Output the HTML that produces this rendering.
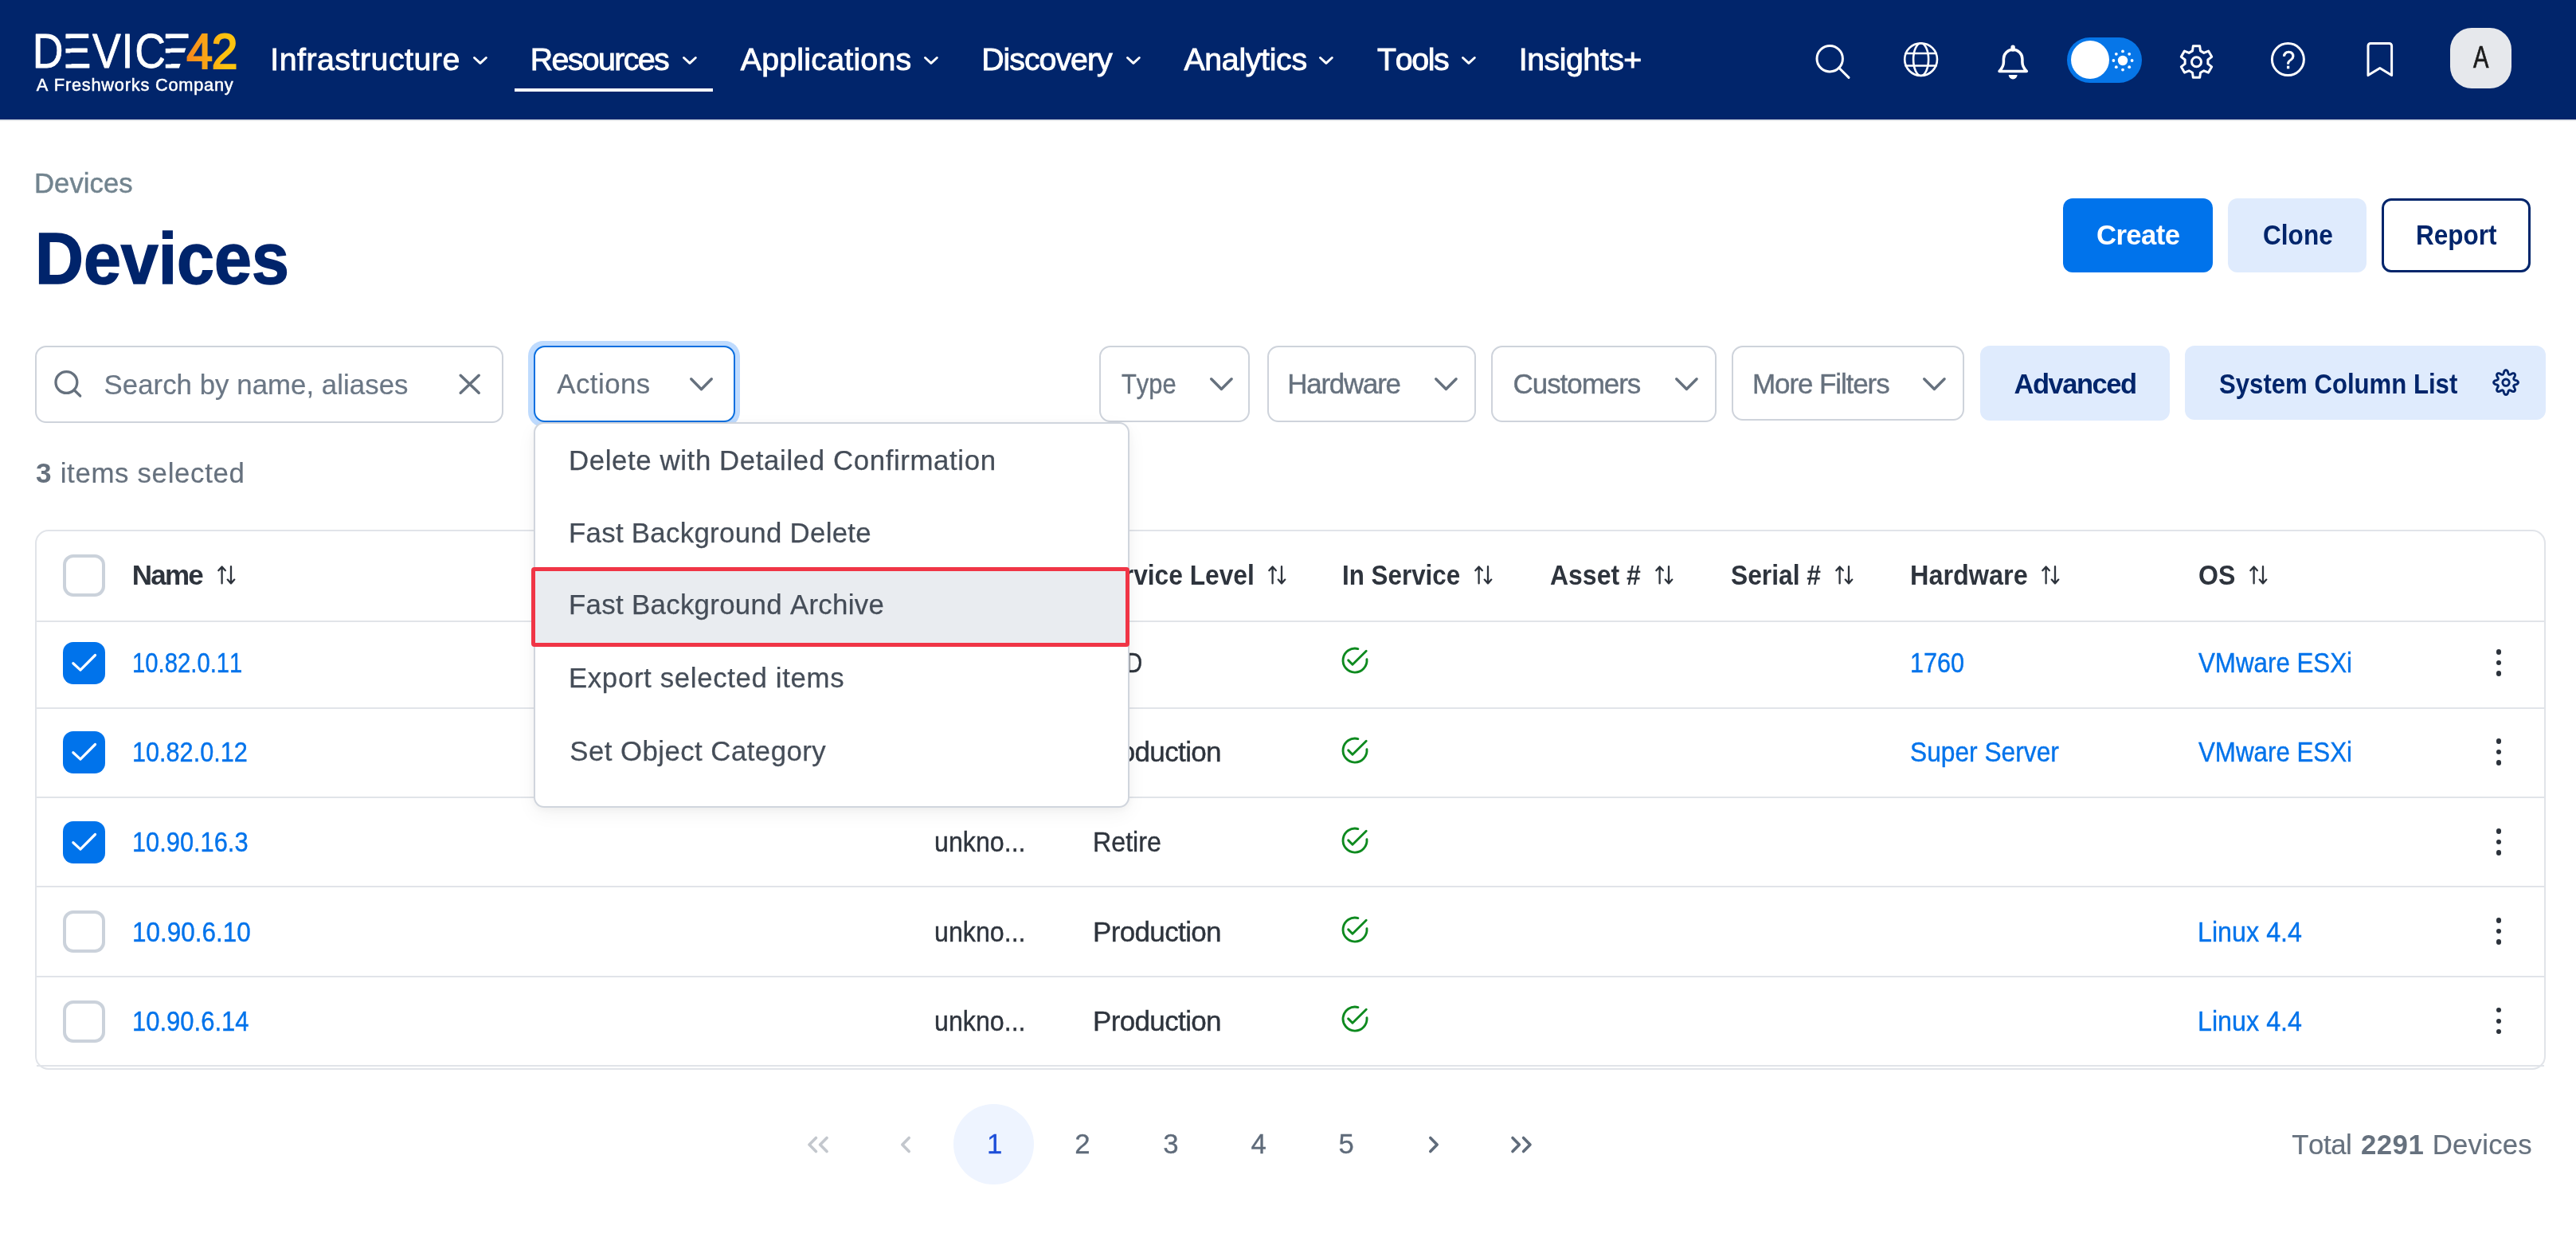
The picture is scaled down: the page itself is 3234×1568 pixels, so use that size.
<!DOCTYPE html><html lang="en"><head><meta charset="utf-8"><title>Devices - Device42</title>
<meta name="viewport" content="width=3234">
<style>
*{box-sizing:border-box;margin:0;padding:0}
html,body{width:3234px;height:1568px;background:#fff;overflow:hidden}
body{will-change:transform}
@media (max-width:1700px){html{zoom:.5}}
body{position:relative;font-family:"Liberation Sans",sans-serif;font-kerning:none;-webkit-font-smoothing:antialiased}
.t{position:absolute;white-space:nowrap;line-height:1;transform-origin:0 50%;display:block;font-weight:400;text-decoration:none}
.a{position:absolute;display:block}
svg{position:absolute;overflow:visible;fill:none;stroke-linecap:round;stroke-linejoin:round}
.topnav{position:absolute;left:0;top:0;width:3234px;height:150px;background:#01256b}
.g{position:absolute;left:0;top:0;width:0;height:0;display:block;list-style:none}
.box{position:absolute;border:2px solid #ced3db;border-radius:14px;background:#fff}
.btn{position:absolute;border-radius:12px}
.cb{position:absolute;width:53px;height:53px;border-radius:13px;border:4px solid #cbd2db;background:#fff}
.cb.on{border:0;background:#0073eb}
.hl{position:absolute;left:46px;width:3147.500px;height:2px;background:#e1e4e9}
</style></head><body>
<nav class="topnav" aria-label="Main">
<svg class="a" style="left:0;top:0" width="320" height="150" viewBox="0 0 320 150" stroke="none"><defs><linearGradient id="g42" gradientUnits="userSpaceOnUse" x1="240" x2="305" y1="0" y2="0"><stop offset="0" stop-color="#f47a20"/><stop offset="1" stop-color="#fdc30f"/></linearGradient></defs><text y="85.5" transform="scale(0.87 1)" font-family="Liberation Sans, sans-serif" font-size="61.6" fill="#fff" stroke="#fff" stroke-width="0.8" x="46.79 90.35 133.29 175.35 194.57 234.26">DEVICE</text><rect x="81.0" y="48.3" width="8.6" height="12.6" fill="#01256b"/><rect x="81.0" y="66.6" width="8.6" height="14" fill="#01256b"/><rect x="206.2" y="48.3" width="8.6" height="12.6" fill="#01256b"/><rect x="206.2" y="66.6" width="8.6" height="14" fill="#01256b"/><polygon points="240.4,40 252,40 252,90 223.300,90" fill="#01256b"/><text y="85.600" transform="scale(0.93 1)" font-family="Liberation Sans, sans-serif" font-size="63.2" fill="url(#g42)" stroke="url(#g42)" stroke-width="2.2" stroke-linejoin="miter" x="251.78 285.75">42</text></svg>
<span class="t" style="left:45.71px;top:96px;font-size:21.80px;color:#fff;letter-spacing:0.762px;-webkit-text-stroke:0.5px #fff">A Freshworks Company</span>
<ul class="g">
<li class="g">
<a class="t" style="left:339.22px;top:55px;font-size:39.30px;color:#fff;letter-spacing:0.504px;-webkit-text-stroke:0.9px #fff">Infrastructure</a>
<svg class="a" style="left:593.7px;top:70.6px" width="17.8" height="9.8" viewBox="0 0 17.8 9.8" stroke="#fff" stroke-width="3" ><polyline points="1.5,1.5 8.9,8.3 16.3,1.5"/></svg>
</li>
<li class="g">
<a class="t" style="left:665.63px;top:55px;font-size:39.30px;color:#fff;letter-spacing:-1.588px;-webkit-text-stroke:0.9px #fff">Resources</a>
<svg class="a" style="left:857px;top:70.6px" width="17.8" height="9.8" viewBox="0 0 17.8 9.8" stroke="#fff" stroke-width="3" ><polyline points="1.5,1.5 8.9,8.3 16.3,1.5"/></svg>
</li>
<li class="g">
<a class="t" style="left:929.77px;top:55px;font-size:39.30px;color:#fff;letter-spacing:0.226px;-webkit-text-stroke:0.9px #fff">Applications</a>
<svg class="a" style="left:1160.4px;top:70.6px" width="17.8" height="9.8" viewBox="0 0 17.8 9.8" stroke="#fff" stroke-width="3" ><polyline points="1.5,1.5 8.9,8.3 16.3,1.5"/></svg>
</li>
<li class="g">
<a class="t" style="left:1232.23px;top:55px;font-size:39.30px;color:#fff;letter-spacing:-1.002px;-webkit-text-stroke:0.9px #fff">Discovery</a>
<svg class="a" style="left:1413.6px;top:70.6px" width="17.8" height="9.8" viewBox="0 0 17.8 9.8" stroke="#fff" stroke-width="3" ><polyline points="1.5,1.5 8.9,8.3 16.3,1.5"/></svg>
</li>
<li class="g">
<a class="t" style="left:1486.47px;top:55px;font-size:39.30px;color:#fff;letter-spacing:-0.333px;-webkit-text-stroke:0.9px #fff">Analytics</a>
<svg class="a" style="left:1656.3px;top:70.6px" width="17.8" height="9.8" viewBox="0 0 17.8 9.8" stroke="#fff" stroke-width="3" ><polyline points="1.5,1.5 8.9,8.3 16.3,1.5"/></svg>
</li>
<li class="g">
<a class="t" style="left:1728.97px;top:55px;font-size:39.30px;color:#fff;letter-spacing:-1.325px;-webkit-text-stroke:0.9px #fff">Tools</a>
<svg class="a" style="left:1835.2px;top:70.6px" width="17.8" height="9.8" viewBox="0 0 17.8 9.8" stroke="#fff" stroke-width="3" ><polyline points="1.5,1.5 8.9,8.3 16.3,1.5"/></svg>
</li>
<li class="g">
<a class="t" style="left:1906.82px;top:55px;font-size:39.30px;color:#fff;letter-spacing:-0.491px;-webkit-text-stroke:0.9px #fff">Insights+</a>
</li>
</ul>
<i class="a" style="left:646px;top:111px;width:249px;height:4px;background:#fff"></i>
<svg class="a" style="left:2270px;top:50px" width="60" height="56" viewBox="0 0 60 56" stroke="#fff" stroke-width="3" ><circle cx="27.2" cy="23.7" r="16.2"/><path d="M38.8 35.3 51 47.4"/></svg>
<svg class="a" style="left:2385px;top:50px" width="54" height="50" viewBox="0 0 54 50" stroke="#fff" stroke-width="2.6" ><circle cx="26.6" cy="24.6" r="20.4"/><ellipse cx="26.6" cy="24.6" rx="9.5" ry="20.4"/><path d="M7.600 17H45.600M7.600 32.500H45.600"/></svg>
<svg class="a" style="left:2500px;top:50px" width="54" height="54" viewBox="0 0 54 54" stroke="#fff" stroke-width="3" ><path d="M10 39.4C13.8 35.5 15.4 33 15.4 28V24A11.75 11.75 0 0 1 38.9 24V28C38.9 33 40.5 35.5 44.3 39.4Z" stroke-width="3.5"/><path d="M27.1 9.2V12" stroke-width="5.4"/><path d="M21.7 44.1h10.900a5.450 5.300 0 0 1-10.900 0Z" fill="#fff" stroke="none"/></svg>
<i class="a" style="left:2595px;top:47px;width:94px;height:57px;border-radius:29px;background:#0676e8"></i>
<i class="a" style="left:2600px;top:51px;width:48px;height:48px;border-radius:50%;background:#fff"></i>
<svg class="a" style="left:2645px;top:55.7px" width="40" height="40" viewBox="0 0 40 40" stroke="none" stroke-width="0" ><circle cx="20" cy="20" r="6.2" fill="#fff"/><circle cx="31.60" cy="20.00" r="1.9" fill="#fff"/><circle cx="28.20" cy="28.20" r="1.9" fill="#fff"/><circle cx="20.00" cy="31.60" r="1.9" fill="#fff"/><circle cx="11.80" cy="28.20" r="1.9" fill="#fff"/><circle cx="8.40" cy="20.00" r="1.9" fill="#fff"/><circle cx="11.80" cy="11.80" r="1.9" fill="#fff"/><circle cx="20.00" cy="8.40" r="1.9" fill="#fff"/><circle cx="28.20" cy="11.80" r="1.9" fill="#fff"/></svg>
<svg class="a" style="left:2730px;top:50px" width="56" height="56" viewBox="0 0 56 56" stroke="#fff" stroke-width="3" ><path d="M32.49 13.88 L31.70 7.84 L23.30 7.84 L22.51 13.88 L18.12 16.42 L12.49 14.08 L8.29 21.36 L13.12 25.06 L13.12 30.14 L8.29 33.84 L12.49 41.12 L18.12 38.78 L22.51 41.32 L23.30 47.36 L31.70 47.36 L32.49 41.32 L36.88 38.78 L42.51 41.12 L46.71 33.84 L41.88 30.14 L41.88 25.06 L46.71 21.36 L42.51 14.08 L36.88 16.42Z"/><circle cx="27.5" cy="27.8" r="6"/></svg>
<svg class="a" style="left:2846px;top:48px" width="54" height="54" viewBox="0 0 54 54" stroke="#fff" stroke-width="3" ><circle cx="26.4" cy="26.6" r="20"/></svg>
<span class="t" style="left:2864.76px;top:60px;font-size:31.50px;color:#fff;transform:scaleX(0.9231);-webkit-text-stroke:0.5px #fff">?</span>
<svg class="a" style="left:2966px;top:48px" width="44" height="52" viewBox="0 0 44 52" stroke="#fff" stroke-width="3" ><path d="M7 9.500a3 3 0 0 1 3-3h23.600a3 3 0 0 1 3 3V46.6L21.800 37.400 7 46.600Z"/></svg>
<i class="a" style="left:3076px;top:35px;width:77px;height:76px;border-radius:27px;background:#e6e8ec"></i>
<span class="t" style="left:3105.29px;top:52px;font-size:39.00px;color:#1c1c1c;transform:scaleX(0.7463);-webkit-text-stroke:0.7px #1c1c1c">A</span>
</nav>
<i class="a" style="left:0;top:150px;width:3234px;height:2px;background:#e2e5ea"></i>
<main class="g">
<header class="g">
<nav class="g" aria-label="Breadcrumb">
<a class="t" style="left:43.00px;top:213px;font-size:34.70px;color:#72848f;letter-spacing:0.031px;-webkit-text-stroke:0.5px #72848f">Devices</a>
</nav>
<h1 class="t" style="left:43.86px;top:279px;font-size:91.40px;color:#00246b;transform:scaleX(0.9226);font-weight:700;-webkit-text-stroke:1.6px #00246b">Devices</h1>
<div class="g" role="button">
<i class="btn" style="left:2590px;top:249px;width:188px;height:93px;background:#0073eb"></i>
<span class="t" style="left:2631.98px;top:278px;font-size:34.70px;color:#fff;letter-spacing:-0.601px;font-weight:700">Create</span>
</div>
<div class="g" role="button">
<i class="btn" style="left:2797px;top:249px;width:174px;height:93px;background:#dfebfd"></i>
<span class="t" style="left:2840.80px;top:278px;font-size:34.70px;color:#01256b;transform:scaleX(0.9106);font-weight:700">Clone</span>
</div>
<div class="g" role="button">
<i class="btn" style="left:2990px;top:249px;width:187px;height:93px;border:3px solid #01256b;background:#fff"></i>
<span class="t" style="left:3033.29px;top:278px;font-size:34.70px;color:#01256b;transform:scaleX(0.9086);font-weight:700">Report</span>
</div>
</header>
<section class="g" aria-label="Toolbar">
<div class="g" role="search">
<i class="box" style="left:44px;top:434px;width:588px;height:97px"></i>
<svg class="a" style="left:60px;top:460px" width="50" height="46" viewBox="0 0 50 46" stroke="#66717e" stroke-width="3.3" ><circle cx="23.4" cy="20" r="13.4"/><path d="M33.2 29.800 40.700 37"/></svg>
<span class="t" style="left:130.52px;top:466px;font-size:34.80px;color:#6b7785;letter-spacing:0.040px;-webkit-text-stroke:0.2px #6b7785">Search by name, aliases</span>
<svg class="a" style="left:570px;top:464px" width="40" height="36" viewBox="0 0 40 36" stroke="#66717e" stroke-width="3.5" ><path d="M8.2 7.300 31.200 29.200M31.200 7.300 8.200 29.200"/></svg>
</div>
<div class="g" role="combobox" aria-expanded="true">
<i class="a" style="left:662.800px;top:428px;width:266.400px;height:108px;border-radius:19px;background:#bfdbfe"></i>
<i class="box" style="left:670px;top:434px;width:253px;height:96px;border-color:#0a6fe0"></i>
<span class="t" style="left:699.33px;top:465px;font-size:34.80px;color:#66717e;letter-spacing:0.451px;-webkit-text-stroke:0.2px #66717e">Actions</span>
<svg class="a" style="left:866.4px;top:474px" width="29.0" height="16.4" viewBox="0 0 29.0 16.4" stroke="#66717e" stroke-width="3.4" ><polyline points="1.7,1.7 14.5,14.7 27.3,1.7"/></svg>
</div>
<div class="g" role="combobox">
<i class="box" style="left:1380px;top:434px;width:189.0px;height:96px"></i>
<span class="t" style="left:1407.51px;top:464px;font-size:35.00px;color:#66717e;transform:scaleX(0.8812);-webkit-text-stroke:0.4px #66717e">Type</span>
<svg class="a" style="left:1518.6px;top:474.1px" width="28.8" height="16.2" viewBox="0 0 28.8 16.2" stroke="#66717e" stroke-width="3.4" ><polyline points="1.7,1.7 14.4,14.5 27.1,1.7"/></svg>
</div>
<div class="g" role="combobox">
<i class="box" style="left:1590.5px;top:434px;width:262.0px;height:96px"></i>
<span class="t" style="left:1616.33px;top:464px;font-size:35.00px;color:#66717e;letter-spacing:-1.300px;-webkit-text-stroke:0.4px #66717e">Hardware</span>
<svg class="a" style="left:1800.7px;top:474.1px" width="28.8" height="16.2" viewBox="0 0 28.8 16.2" stroke="#66717e" stroke-width="3.4" ><polyline points="1.7,1.7 14.4,14.5 27.1,1.7"/></svg>
</div>
<div class="g" role="combobox">
<i class="box" style="left:1871.8px;top:434px;width:282.9px;height:96px"></i>
<span class="t" style="left:1899.52px;top:464px;font-size:35.00px;color:#66717e;letter-spacing:-1.058px;-webkit-text-stroke:0.4px #66717e">Customers</span>
<svg class="a" style="left:2102.6000000000004px;top:474.1px" width="28.8" height="16.2" viewBox="0 0 28.8 16.2" stroke="#66717e" stroke-width="3.4" ><polyline points="1.7,1.7 14.4,14.5 27.1,1.7"/></svg>
</div>
<div class="g" role="combobox">
<i class="box" style="left:2174px;top:434px;width:291.6px;height:94px"></i>
<span class="t" style="left:2200.03px;top:464px;font-size:35.00px;color:#66717e;letter-spacing:-1.100px;-webkit-text-stroke:0.4px #66717e">More Filters</span>
<svg class="a" style="left:2414.1000000000004px;top:474.1px" width="28.8" height="16.2" viewBox="0 0 28.8 16.2" stroke="#66717e" stroke-width="3.4" ><polyline points="1.7,1.7 14.4,14.5 27.1,1.7"/></svg>
</div>
<div class="g" role="button">
<i class="btn" style="left:2486px;top:434px;width:238px;height:94px;background:#dfebfd"></i>
<span class="t" style="left:2528.44px;top:465px;font-size:34.50px;color:#01256b;letter-spacing:-1.465px;font-weight:700">Advanced</span>
</div>
<div class="g" role="button">
<i class="btn" style="left:2742.500px;top:434px;width:453.500px;height:93px;background:#dfebfd"></i>
<span class="t" style="left:2785.90px;top:465px;font-size:34.50px;color:#01256b;transform:scaleX(0.9024);font-weight:700">System Column List</span>
<svg class="a" style="left:3128px;top:462px" width="38" height="38" viewBox="0 0 38 38" stroke="#01256b" stroke-width="2.9" ><path d="M33.45 18.10 L33.35 18.70 L33.05 19.28 L32.56 19.82 L31.87 20.29 L30.80 20.64 L29.72 20.90 L29.01 21.19 L28.47 21.48 L28.08 21.80 L27.84 22.16 L27.76 22.57 L27.81 23.07 L27.99 23.66 L28.29 24.37 L28.86 25.32 L29.37 26.33 L29.52 27.15 L29.49 27.87 L29.29 28.49 L28.94 28.99 L28.44 29.34 L27.82 29.54 L27.10 29.57 L26.28 29.42 L25.27 28.91 L24.32 28.34 L23.61 28.04 L23.02 27.86 L22.52 27.81 L22.11 27.89 L21.75 28.13 L21.43 28.52 L21.14 29.06 L20.85 29.77 L20.59 30.85 L20.24 31.92 L19.77 32.61 L19.23 33.10 L18.65 33.40 L18.05 33.50 L17.45 33.40 L16.87 33.10 L16.33 32.61 L15.86 31.92 L15.51 30.85 L15.25 29.77 L14.96 29.06 L14.67 28.52 L14.35 28.13 L13.99 27.89 L13.58 27.81 L13.08 27.86 L12.49 28.04 L11.78 28.34 L10.83 28.91 L9.82 29.42 L9.00 29.57 L8.28 29.54 L7.66 29.34 L7.16 28.99 L6.81 28.49 L6.61 27.87 L6.58 27.15 L6.73 26.33 L7.24 25.32 L7.81 24.37 L8.11 23.66 L8.29 23.07 L8.34 22.57 L8.26 22.16 L8.02 21.80 L7.63 21.48 L7.09 21.19 L6.38 20.90 L5.30 20.64 L4.23 20.29 L3.54 19.82 L3.05 19.28 L2.75 18.70 L2.65 18.10 L2.75 17.50 L3.05 16.92 L3.54 16.38 L4.23 15.91 L5.30 15.56 L6.38 15.30 L7.09 15.01 L7.63 14.72 L8.02 14.40 L8.26 14.04 L8.34 13.63 L8.29 13.13 L8.11 12.54 L7.81 11.83 L7.24 10.88 L6.73 9.87 L6.58 9.05 L6.61 8.33 L6.81 7.71 L7.16 7.21 L7.66 6.86 L8.28 6.66 L9.00 6.63 L9.82 6.78 L10.83 7.29 L11.78 7.86 L12.49 8.16 L13.08 8.34 L13.58 8.39 L13.99 8.31 L14.35 8.07 L14.67 7.68 L14.96 7.14 L15.25 6.43 L15.51 5.35 L15.86 4.28 L16.33 3.59 L16.87 3.10 L17.45 2.80 L18.05 2.70 L18.65 2.80 L19.23 3.10 L19.77 3.59 L20.24 4.28 L20.59 5.35 L20.85 6.43 L21.14 7.14 L21.43 7.68 L21.75 8.07 L22.11 8.31 L22.52 8.39 L23.02 8.34 L23.61 8.16 L24.32 7.86 L25.27 7.29 L26.28 6.78 L27.10 6.63 L27.82 6.66 L28.44 6.86 L28.94 7.21 L29.29 7.71 L29.49 8.33 L29.52 9.05 L29.37 9.87 L28.86 10.88 L28.29 11.83 L27.99 12.54 L27.81 13.13 L27.76 13.63 L27.84 14.04 L28.08 14.40 L28.47 14.72 L29.01 15.01 L29.72 15.30 L30.80 15.56 L31.87 15.91 L32.56 16.38 L33.05 16.92 L33.35 17.50Z"/><circle cx="18.05" cy="18.2" r="4.2"/></svg>
</div>
</section>
<p class="g">
<b class="t" style="left:45.49px;top:577px;font-size:34.80px;color:#66717e;transform:scaleX(1.0117);font-weight:700">3</b>
<span class="t" style="left:75.67px;top:577px;font-size:34.80px;color:#66717e;letter-spacing:0.680px;-webkit-text-stroke:0.2px #66717e">items selected</span>
</p>
<div class="g" role="table" aria-label="Devices">
<i class="a" style="left:44px;top:665px;width:3151.500px;height:678px;border:2px solid #e1e4e9;border-radius:17px"></i>
<i class="hl" style="top:779px"></i>
<i class="hl" style="top:888px"></i>
<i class="hl" style="top:1000px"></i>
<i class="hl" style="top:1112px"></i>
<i class="hl" style="top:1225px"></i>
<i class="hl" style="top:1337px"></i>
<div class="g" role="row">
<i class="cb" style="left:79px;top:696px"></i>
<span class="t" style="left:165.66px;top:704px;font-size:35.00px;color:#2e343d;letter-spacing:-1.730px;font-weight:700">Name</span>
<svg class="a" style="left:272.5px;top:710px" width="23" height="24" viewBox="0 0 23 24" stroke="#2e343d" stroke-width="2.3" ><path d="M5.6 22.4V1.6M1.3 6.2 5.6 1.4 9.9 6.2M17 1.2V22M12.7 17.6 17 22.4 21.3 17.6"/></svg>
<span class="t" style="left:1372.49px;top:704px;font-size:35.00px;color:#2e343d;transform:scaleX(0.9061);font-weight:700">Service Level</span>
<svg class="a" style="left:1591.8px;top:710px" width="23" height="24" viewBox="0 0 23 24" stroke="#2e343d" stroke-width="2.3" ><path d="M5.6 22.4V1.6M1.3 6.2 5.6 1.4 9.9 6.2M17 1.2V22M12.7 17.6 17 22.4 21.3 17.6"/></svg>
<span class="t" style="left:1685.00px;top:704px;font-size:35.00px;color:#2e343d;transform:scaleX(0.8959);font-weight:700">In Service</span>
<svg class="a" style="left:1850.8px;top:710px" width="23" height="24" viewBox="0 0 23 24" stroke="#2e343d" stroke-width="2.3" ><path d="M5.6 22.4V1.6M1.3 6.2 5.6 1.4 9.9 6.2M17 1.2V22M12.7 17.6 17 22.4 21.3 17.6"/></svg>
<span class="t" style="left:1945.60px;top:704px;font-size:35.00px;color:#2e343d;transform:scaleX(0.9132);font-weight:700">Asset #</span>
<svg class="a" style="left:2077.6px;top:710px" width="23" height="24" viewBox="0 0 23 24" stroke="#2e343d" stroke-width="2.3" ><path d="M5.6 22.4V1.6M1.3 6.2 5.6 1.4 9.9 6.2M17 1.2V22M12.7 17.6 17 22.4 21.3 17.6"/></svg>
<span class="t" style="left:2172.78px;top:704px;font-size:35.00px;color:#2e343d;transform:scaleX(0.9076);font-weight:700">Serial #</span>
<svg class="a" style="left:2304.3px;top:710px" width="23" height="24" viewBox="0 0 23 24" stroke="#2e343d" stroke-width="2.3" ><path d="M5.6 22.4V1.6M1.3 6.2 5.6 1.4 9.9 6.2M17 1.2V22M12.7 17.6 17 22.4 21.3 17.6"/></svg>
<span class="t" style="left:2397.53px;top:704px;font-size:35.00px;color:#2e343d;transform:scaleX(0.9258);font-weight:700">Hardware</span>
<svg class="a" style="left:2562.9px;top:710px" width="23" height="24" viewBox="0 0 23 24" stroke="#2e343d" stroke-width="2.3" ><path d="M5.6 22.4V1.6M1.3 6.2 5.6 1.4 9.9 6.2M17 1.2V22M12.7 17.6 17 22.4 21.3 17.6"/></svg>
<span class="t" style="left:2760.28px;top:704px;font-size:35.00px;color:#2e343d;transform:scaleX(0.9170);font-weight:700">OS</span>
<svg class="a" style="left:2824.4px;top:710px" width="23" height="24" viewBox="0 0 23 24" stroke="#2e343d" stroke-width="2.3" ><path d="M5.6 22.4V1.6M1.3 6.2 5.6 1.4 9.9 6.2M17 1.2V22M12.7 17.6 17 22.4 21.3 17.6"/></svg>
</div>
<div class="g" role="row">
<i class="cb on" style="left:79px;top:805.9px"></i>
<svg class="a" style="left:79px;top:805.9px" width="53" height="53" viewBox="0 0 53 53" stroke="#fff" stroke-width="3.2" ><path d="M12.850 26.700 21.950 35.100 40.500 16.500"/></svg>
<a class="t" style="left:165.97px;top:814px;font-size:35.00px;color:#0073eb;transform:scaleX(0.8364);-webkit-text-stroke:0.4px #0073eb">10.82.0.11</a>
<span class="t" style="left:1372.52px;top:814px;font-size:35.00px;color:#2e343d;transform:scaleX(0.8277);-webkit-text-stroke:0.4px #2e343d">R&amp;D</span>
<svg class="a" style="left:1683.8px;top:812.3px" width="34" height="34" viewBox="0 0 34 34" stroke="#0e8a1f" stroke-width="2.9" ><path d="M20.9 2.600A15 15 0 1 0 31.950 15.600"/><path d="M8.700 16.900 14 22.200 31.200 5.300"/></svg>
<a class="t" style="left:2397.57px;top:814px;font-size:35.00px;color:#0073eb;transform:scaleX(0.8737);-webkit-text-stroke:0.4px #0073eb">1760</a>
<a class="t" style="left:2760.26px;top:814px;font-size:35.00px;color:#0073eb;transform:scaleX(0.8942);-webkit-text-stroke:0.4px #0073eb">VMware ESXi</a>
<i class="a" style="left:3133.6000000000004px;top:815.3px;width:6.400px;height:6.400px;border-radius:50%;background:#2b323b"></i><i class="a" style="left:3133.6000000000004px;top:828.8px;width:6.400px;height:6.400px;border-radius:50%;background:#2b323b"></i><i class="a" style="left:3133.6000000000004px;top:842.3px;width:6.400px;height:6.400px;border-radius:50%;background:#2b323b"></i>
</div>
<div class="g" role="row">
<i class="cb on" style="left:79px;top:918.4px"></i>
<svg class="a" style="left:79px;top:918.4px" width="53" height="53" viewBox="0 0 53 53" stroke="#fff" stroke-width="3.2" ><path d="M12.850 26.700 21.950 35.100 40.500 16.500"/></svg>
<a class="t" style="left:165.87px;top:926px;font-size:35.00px;color:#0073eb;transform:scaleX(0.8751);-webkit-text-stroke:0.4px #0073eb">10.82.0.12</a>
<span class="t" style="left:1372.03px;top:926px;font-size:35.00px;color:#2e343d;letter-spacing:-0.643px;-webkit-text-stroke:0.4px #2e343d">Production</span>
<svg class="a" style="left:1683.8px;top:924.8px" width="34" height="34" viewBox="0 0 34 34" stroke="#0e8a1f" stroke-width="2.9" ><path d="M20.9 2.600A15 15 0 1 0 31.950 15.600"/><path d="M8.700 16.900 14 22.200 31.200 5.300"/></svg>
<a class="t" style="left:2397.76px;top:926px;font-size:35.00px;color:#0073eb;transform:scaleX(0.9062);-webkit-text-stroke:0.4px #0073eb">Super Server</a>
<a class="t" style="left:2760.26px;top:926px;font-size:35.00px;color:#0073eb;transform:scaleX(0.8942);-webkit-text-stroke:0.4px #0073eb">VMware ESXi</a>
<i class="a" style="left:3133.6000000000004px;top:927.3px;width:6.400px;height:6.400px;border-radius:50%;background:#2b323b"></i><i class="a" style="left:3133.6000000000004px;top:940.8px;width:6.400px;height:6.400px;border-radius:50%;background:#2b323b"></i><i class="a" style="left:3133.6000000000004px;top:954.3px;width:6.400px;height:6.400px;border-radius:50%;background:#2b323b"></i>
</div>
<div class="g" role="row">
<i class="cb on" style="left:79px;top:1031.3px"></i>
<svg class="a" style="left:79px;top:1031.3px" width="53" height="53" viewBox="0 0 53 53" stroke="#fff" stroke-width="3.2" ><path d="M12.850 26.700 21.950 35.100 40.500 16.500"/></svg>
<a class="t" style="left:165.86px;top:1039px;font-size:35.00px;color:#0073eb;transform:scaleX(0.8795);-webkit-text-stroke:0.4px #0073eb">10.90.16.3</a>
<span class="t" style="left:1173.41px;top:1039px;font-size:35.00px;color:#2e343d;transform:scaleX(0.9197);-webkit-text-stroke:0.4px #2e343d">unkno...</span>
<span class="t" style="left:1372.26px;top:1039px;font-size:35.00px;color:#2e343d;transform:scaleX(0.9198);-webkit-text-stroke:0.4px #2e343d">Retire</span>
<svg class="a" style="left:1683.8px;top:1037.7px" width="34" height="34" viewBox="0 0 34 34" stroke="#0e8a1f" stroke-width="2.9" ><path d="M20.9 2.600A15 15 0 1 0 31.950 15.600"/><path d="M8.700 16.900 14 22.200 31.200 5.300"/></svg>
<i class="a" style="left:3133.6000000000004px;top:1040.3px;width:6.400px;height:6.400px;border-radius:50%;background:#2b323b"></i><i class="a" style="left:3133.6000000000004px;top:1053.8px;width:6.400px;height:6.400px;border-radius:50%;background:#2b323b"></i><i class="a" style="left:3133.6000000000004px;top:1067.3px;width:6.400px;height:6.400px;border-radius:50%;background:#2b323b"></i>
</div>
<div class="g" role="row">
<i class="cb" style="left:79px;top:1143.1px"></i>
<a class="t" style="left:165.80px;top:1152px;font-size:35.00px;color:#0073eb;transform:scaleX(0.8990);-webkit-text-stroke:0.4px #0073eb">10.90.6.10</a>
<span class="t" style="left:1173.41px;top:1152px;font-size:35.00px;color:#2e343d;transform:scaleX(0.9197);-webkit-text-stroke:0.4px #2e343d">unkno...</span>
<span class="t" style="left:1372.03px;top:1152px;font-size:35.00px;color:#2e343d;letter-spacing:-0.643px;-webkit-text-stroke:0.4px #2e343d">Production</span>
<svg class="a" style="left:1683.8px;top:1149.5px" width="34" height="34" viewBox="0 0 34 34" stroke="#0e8a1f" stroke-width="2.9" ><path d="M20.9 2.600A15 15 0 1 0 31.950 15.600"/><path d="M8.700 16.900 14 22.200 31.200 5.300"/></svg>
<a class="t" style="left:2759.15px;top:1152px;font-size:35.00px;color:#0073eb;transform:scaleX(0.9222);-webkit-text-stroke:0.4px #0073eb">Linux 4.4</a>
<i class="a" style="left:3133.6000000000004px;top:1152.3px;width:6.400px;height:6.400px;border-radius:50%;background:#2b323b"></i><i class="a" style="left:3133.6000000000004px;top:1165.8px;width:6.400px;height:6.400px;border-radius:50%;background:#2b323b"></i><i class="a" style="left:3133.6000000000004px;top:1179.3px;width:6.400px;height:6.400px;border-radius:50%;background:#2b323b"></i>
</div>
<div class="g" role="row">
<i class="cb" style="left:79px;top:1255.7px"></i>
<a class="t" style="left:165.84px;top:1264px;font-size:35.00px;color:#0073eb;transform:scaleX(0.8854);-webkit-text-stroke:0.4px #0073eb">10.90.6.14</a>
<span class="t" style="left:1173.41px;top:1264px;font-size:35.00px;color:#2e343d;transform:scaleX(0.9197);-webkit-text-stroke:0.4px #2e343d">unkno...</span>
<span class="t" style="left:1372.03px;top:1264px;font-size:35.00px;color:#2e343d;letter-spacing:-0.643px;-webkit-text-stroke:0.4px #2e343d">Production</span>
<svg class="a" style="left:1683.8px;top:1262.1px" width="34" height="34" viewBox="0 0 34 34" stroke="#0e8a1f" stroke-width="2.9" ><path d="M20.9 2.600A15 15 0 1 0 31.950 15.600"/><path d="M8.700 16.900 14 22.200 31.200 5.300"/></svg>
<a class="t" style="left:2759.15px;top:1264px;font-size:35.00px;color:#0073eb;transform:scaleX(0.9222);-webkit-text-stroke:0.4px #0073eb">Linux 4.4</a>
<i class="a" style="left:3133.6000000000004px;top:1265.0px;width:6.400px;height:6.400px;border-radius:50%;background:#2b323b"></i><i class="a" style="left:3133.6000000000004px;top:1278.5px;width:6.400px;height:6.400px;border-radius:50%;background:#2b323b"></i><i class="a" style="left:3133.6000000000004px;top:1292.0px;width:6.400px;height:6.400px;border-radius:50%;background:#2b323b"></i>
</div>
</div>
<ul class="g" role="listbox" aria-label="Actions">
<div class="a" style="left:670px;top:530px;width:748px;height:484px;border:2px solid #d0d5dd;border-radius:13px;background:#fff;box-shadow:0 2px 8px rgba(0,0,0,.04),0 8px 24px rgba(0,0,0,.05)"></div>
<i class="a" style="left:666.500px;top:711.500px;width:751.500px;height:100.500px;border:5.500px solid #f03546;border-radius:4px;background:#e9ecf0"></i>
<li class="g" role="option"><span class="t" style="left:713.97px;top:561px;font-size:34.80px;color:#454d58;letter-spacing:0.613px;-webkit-text-stroke:0.25px #454d58">Delete with Detailed Confirmation</span></li>
<li class="g" role="option"><span class="t" style="left:713.97px;top:652px;font-size:34.80px;color:#454d58;letter-spacing:0.306px;-webkit-text-stroke:0.25px #454d58">Fast Background Delete</span></li>
<li class="g" role="option"><span class="t" style="left:713.97px;top:742px;font-size:34.80px;color:#454d58;letter-spacing:0.326px;-webkit-text-stroke:0.25px #454d58">Fast Background Archive</span></li>
<li class="g" role="option"><span class="t" style="left:713.97px;top:834px;font-size:34.80px;color:#454d58;letter-spacing:0.649px;-webkit-text-stroke:0.25px #454d58">Export selected items</span></li>
<li class="g" role="option"><span class="t" style="left:715.24px;top:926px;font-size:34.80px;color:#454d58;letter-spacing:0.453px;-webkit-text-stroke:0.25px #454d58">Set Object Category</span></li>
</ul>
<nav class="g" aria-label="Pagination">
<svg class="a" style="left:996.8px;top:1406.7px" width="60" height="60" viewBox="0 0 60 60" stroke="#c3c7cd" stroke-width="3.6" ><path d="M27.4 21.5 19.0 30 27.4 38.5 M41.0 21.5 32.6 30 41.0 38.5"/></svg>
<svg class="a" style="left:1106.8px;top:1406.7px" width="60" height="60" viewBox="0 0 60 60" stroke="#c3c7cd" stroke-width="3.6" ><path d="M34.2 21.5 25.8 30 34.2 38.5"/></svg>
<i class="a" style="left:1196.500px;top:1385.500px;width:101.500px;height:101.500px;border-radius:50%;background:#eef4ff"></i>
<span class="t" style="left:1238.90px;top:1419px;font-size:34.80px;color:#1d4ed8;-webkit-text-stroke:0.3px #1d4ed8">1</span>
<span class="t" style="left:1349.37px;top:1419px;font-size:34.80px;color:#5f6b7a;-webkit-text-stroke:0.3px #5f6b7a">2</span>
<span class="t" style="left:1460.17px;top:1419px;font-size:34.80px;color:#5f6b7a;-webkit-text-stroke:0.3px #5f6b7a">3</span>
<span class="t" style="left:1570.58px;top:1419px;font-size:34.80px;color:#5f6b7a;-webkit-text-stroke:0.3px #5f6b7a">4</span>
<span class="t" style="left:1680.51px;top:1419px;font-size:34.80px;color:#5f6b7a;-webkit-text-stroke:0.3px #5f6b7a">5</span>
<svg class="a" style="left:1769.7px;top:1406.7px" width="60" height="60" viewBox="0 0 60 60" stroke="#5f6b7a" stroke-width="3.6" ><path d="M25.8 21.5 34.2 30 25.8 38.5"/></svg>
<svg class="a" style="left:1879.7px;top:1406.7px" width="60" height="60" viewBox="0 0 60 60" stroke="#5f6b7a" stroke-width="3.6" ><path d="M19.0 21.5 27.4 30 19.0 38.5 M32.6 21.5 41.0 30 32.6 38.5"/></svg>
</nav>
<p class="g">
<span class="t" style="left:2877.22px;top:1420px;font-size:34.80px;color:#66717e;letter-spacing:-0.439px;-webkit-text-stroke:0.2px #66717e">Total</span>
<b class="t" style="left:2963.99px;top:1420px;font-size:34.80px;color:#66717e;letter-spacing:0.453px;font-weight:700">2291</b>
<span class="t" style="left:3053.65px;top:1420px;font-size:34.80px;color:#66717e;letter-spacing:0.224px;-webkit-text-stroke:0.2px #66717e">Devices</span>
</p>
</main>
</body></html>
